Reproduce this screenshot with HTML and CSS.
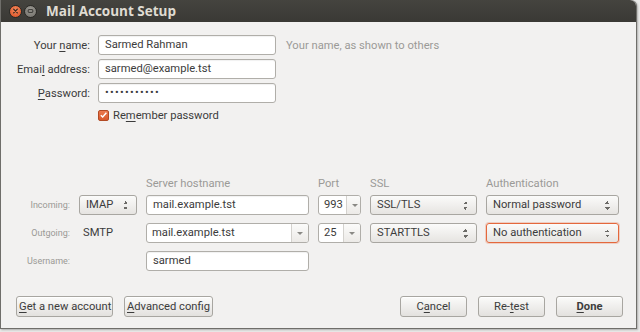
FILE: index.html
```html
<!DOCTYPE html>
<html lang="en">
<head>
    <meta charset="UTF-8">
    <title>Mail Account Setup</title>
    <link rel="stylesheet" href="styles.css">
</head>
<body>
    <div class="janela">
        <div class="barra-titulo">
            <span class="wbtn wbtn-fechar">
                <svg width="12" height="12" viewBox="0 0 12 12"><path d="M4 4 L8 8 M8 4 L4 8" stroke="#3a2a22" stroke-width="1.4" stroke-linecap="round"/></svg>
            </span>
            <span class="wbtn wbtn-min">
                <svg width="12" height="12" viewBox="0 0 12 12"><rect x="3.5" y="4.5" width="5" height="3" rx="0.5" fill="none" stroke="#2e2d2a" stroke-width="1"/></svg>
            </span>
            <span class="titulo">Mail Account Setup</span>
        </div>

        <div class="conteudo">
            <div class="identidade">
                <span class="rotulo">Your <u>n</u>ame:</span>
                <div class="entrada">Sarmed Rahman</div>
                <span class="dica">Your name, as shown to others</span>

                <span class="rotulo">Emai<u>l</u> address:</span>
                <div class="entrada">sarmed@example.tst</div>
                <span></span>

                <span class="rotulo"><u>P</u>assword:</span>
                <div class="entrada entrada-senha">•••••••••••</div>
                <span></span>
            </div>

            <div class="lembrar">
                <span class="caixa">
                    <svg width="10" height="10" viewBox="0 0 10 10"><path d="M2 5.2 L4.1 7.3 L8.2 2.6" fill="none" stroke="#fff" stroke-width="1.6"/></svg>
                </span>
                <span>Re<u>m</u>ember password</span>
            </div>

            <div class="servidores">
                <span></span>
                <span></span>
                <span class="cabecalho">Server hostname</span>
                <span class="cabecalho">Port</span>
                <span class="cabecalho">SSL</span>
                <span class="cabecalho">Authentication</span>

                <span class="rotulo-pequeno">Incoming:</span>
                <div class="seletor">IMAP<span class="setas"></span></div>
                <div class="entrada">mail.example.tst</div>
                <div class="combo"><span class="combo-texto">993</span><span class="combo-botao"></span></div>
                <div class="seletor">SSL/TLS<span class="setas"></span></div>
                <div class="seletor">Normal password<span class="setas"></span></div>

                <span class="rotulo-pequeno">Outgoing:</span>
                <span class="protocolo">SMTP</span>
                <div class="combo"><span class="combo-texto">mail.example.tst</span><span class="combo-botao"></span></div>
                <div class="combo"><span class="combo-texto">25</span><span class="combo-botao"></span></div>
                <div class="seletor">STARTTLS<span class="setas"></span></div>
                <div class="seletor seletor-foco">No authentication<span class="setas"></span></div>

                <span class="rotulo-pequeno">Username:</span>
                <span></span>
                <div class="entrada">sarmed</div>
            </div>

            <div class="acoes">
                <button class="btn btn-largo"><u>G</u>et a new account</button>
                <button class="btn btn-avancado"><u>A</u>dvanced config</button>
                <span class="espaco"></span>
                <button class="btn">C<u>a</u>ncel</button>
                <button class="btn">Re-<u>t</u>est</button>
                <button class="btn btn-feito"><u>D</u>one</button>
            </div>
        </div>
    </div>
</body>
</html>
```

FILE: styles.css
```css
:root {
    --fundo-janela: #f2f1f0;
    --barra: #3d3c38;
    --texto: #3c3c3c;
    --texto-fraco: #9b9a97;
    --borda: #b0aea9;
    --laranja: #e4683c;
}
* { box-sizing: border-box; margin: 0; padding: 0; }
body {
    width: 640px; height: 332px; overflow: hidden;
    background: #e9e9e8;
    font-family: Roboto, "Open Sans", "DejaVu Sans", sans-serif;
    font-size: 11.2px;
    color: var(--texto);
}
u { text-decoration: underline; text-underline-offset: 2px; }

.janela {
    width: 637px; height: 329px;
    background: var(--fundo-janela);
    border: 1px solid #6f6e6a; border-top: none;
    border-radius: 0 6px 0 0;
    display: flex; flex-direction: column;
    box-shadow: 1px 1px 2px rgba(0,0,0,0.25);
}
.barra-titulo {
    height: 22px; flex: none;
    background: linear-gradient(#45443f, #3a3935);
    border-radius: 0 6px 0 0;
    display: flex; align-items: center; padding-left: 8px; gap: 2px;
}
.wbtn {
    width: 13px; height: 13px; border-radius: 50%;
    display: flex; align-items: center; justify-content: center;
}
.wbtn-fechar { background: radial-gradient(circle at 50% 35%, #f58a5c, #d84d22); border: 1px solid #2a2925; }
.wbtn-min { background: radial-gradient(circle at 50% 35%, #9c9a94, #6e6c67); border: 1px solid #2a2925; }
.titulo {
    margin-left: 7px; color: #dfdbd2; font-weight: 700; font-size: 13.5px;
    font-family: "Open Sans", "DejaVu Sans", sans-serif;
}

.conteudo { flex: 1; display: flex; flex-direction: column; padding-top: 13px; }

.identidade {
    display: grid;
    grid-template-columns: 89px 178px auto;
    column-gap: 8px; row-gap: 4px;
    align-items: center;
}
.identidade .dica { margin-left: 2px; color: var(--texto-fraco); }
.rotulo { text-align: right; }

.entrada {
    height: 20px; background: #fff;
    border: 1px solid var(--borda); border-radius: 3px;
    box-shadow: inset 0 1px 1px rgba(0,0,0,0.06);
    padding: 0 6px; line-height: 18px; white-space: nowrap; overflow: hidden;
}
.entrada-senha { font-size: 11px; letter-spacing: 1.3px; }

.lembrar {
    margin: 4px 0 0 97px; height: 16px;
    display: flex; align-items: center; gap: 4px;
}
.caixa {
    width: 11px; height: 11px; border-radius: 2px;
    background: linear-gradient(#ec7a4e, #d8592c);
    border: 1px solid #b24a24;
    display: flex; align-items: center; justify-content: center;
}

.servidores {
    margin-top: 51px;
    display: grid;
    grid-template-columns: 69px 58px 163px 43px 107px 133px;
    grid-template-rows: 13px 20px 20px 20px;
    column-gap: 9px; row-gap: 8px;
    align-items: stretch;
}
.servidores .cabecalho {
    color: var(--texto-fraco); align-self: end;
    line-height: 14px; margin-bottom: -4px;
}
.rotulo-pequeno {
    text-align: right; font-size: 9px; color: #9a9995;
    line-height: 20px;
}
.protocolo { padding-left: 4px; line-height: 20px; }

.seletor {
    position: relative; height: 20px;
    border: 1px solid #a8a6a1; border-radius: 3px;
    background: linear-gradient(#fbfbfa, #e6e4e1);
    padding: 0 6px; line-height: 18px; white-space: nowrap;
}
.seletor-foco { border-color: var(--laranja); box-shadow: 0 0 0 1px rgba(228,104,60,0.25); }
.setas {
    position: absolute; right: 8px; top: 5px; width: 5px; height: 9px;
    background:
        linear-gradient(to bottom right, transparent 50%, #6b6a66 50%) 0 0 / 3px 3px no-repeat,
        linear-gradient(to bottom left, transparent 50%, #6b6a66 50%) 2px 0 / 3px 3px no-repeat,
        linear-gradient(to top right, transparent 50%, #6b6a66 50%) 0 6px / 3px 3px no-repeat,
        linear-gradient(to top left, transparent 50%, #6b6a66 50%) 2px 6px / 3px 3px no-repeat;
}

.combo {
    height: 20px; display: flex;
    border: 1px solid var(--borda); border-radius: 3px;
    background: #fff; overflow: hidden;
}
.combo-texto { flex: 1; padding: 0 3px 0 5px; line-height: 18px; white-space: nowrap; }
.combo-botao {
    width: 17px; flex: none;
    border-left: 1px solid #d4d2ce;
    background: linear-gradient(#fbfbfa, #eceae7);
    position: relative;
}
.combo-botao::after {
    content: ""; position: absolute; left: 5px; top: 8px;
    border-left: 3px solid transparent; border-right: 3px solid transparent;
    border-top: 3px solid #8a8985;
}

.acoes {
    margin-top: auto; margin-bottom: 11px;
    display: flex; gap: 11px; padding: 0 13px 0 15px;
}
.espaco { flex: 1; }
.btn {
    height: 21px; min-width: 67px; padding: 0 2px;
    font: inherit; color: var(--texto); white-space: nowrap;
    border: 1px solid #a8a6a1; border-radius: 3px;
    background: linear-gradient(#fbfbfa, #e3e1de);
    box-shadow: inset 0 1px 0 #fff;
}
.btn-largo { width: 97px; }
.btn-avancado { width: 89px; }
.btn-feito { font-weight: 700; }
```
